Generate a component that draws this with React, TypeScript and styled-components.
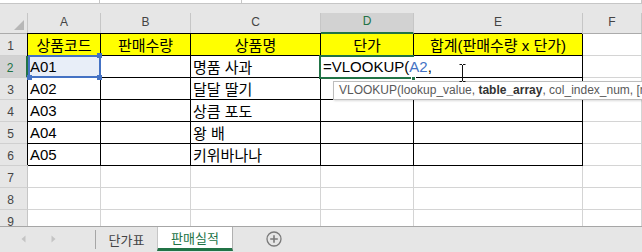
import { Fragment } from 'react'
import styled, { createGlobalStyle } from 'styled-components'

const GlobalStyle = createGlobalStyle`
  * { box-sizing: border-box; }
  html, body { margin: 0; padding: 0; background: #fff; }
  body { font-family: 'Liberation Sans', 'Noto Sans CJK KR', sans-serif; }
`

const Window = styled.div`
  width: 642px;
  height: 252px;
  overflow: hidden;
  display: flex;
  flex-direction: column;
  background: #e6e6e6;
`

const FormulaStrip = styled.div`
  flex: none;
  height: 13px;
  display: flex;
  align-items: flex-start;
`

const StripPart = styled.div<{ $w?: number }>`
  height: 4px;
  ${p => (p.$w ? `width: ${p.$w}px;` : 'flex: 1;')}
  background: #fff;
  border-right: 1px solid #c6c6c6;
  border-bottom: 1px solid #c6c6c6;
`

const Sheet = styled.div`
  flex: none;
  height: 213px;
  overflow: hidden;
  display: grid;
  grid-template-columns: 28px 73px 90px 130px 93px 169px 1fr;
  grid-template-rows: 21px repeat(9, 22px);
  background: #fff;
`

const Corner = styled.div`
  position: relative;
  background: #e6e6e6;
  border-right: 1px solid #c6c6c6;
  border-bottom: 1px solid #ababab;
  &::after {
    content: '';
    position: absolute;
    right: 3px;
    bottom: 3px;
    border-style: solid;
    border-width: 0 0 10px 10px;
    border-color: transparent transparent #b7b7b7 transparent;
  }
`

const ColHead = styled.div<{ $active?: boolean }>`
  position: relative;
  z-index: ${p => (p.$active ? 1 : 'auto')};
  display: flex;
  align-items: center;
  justify-content: center;
  padding-bottom: 3px;
  font-size: 12px;
  color: ${p => (p.$active ? '#217346' : '#444')};
  background: ${p => (p.$active ? '#d2d2d2' : '#e6e6e6')};
  border-right: 1px solid #c6c6c6;
  border-bottom: ${p => (p.$active ? '2px solid #217346' : '1px solid #ababab')};
`

const RowHead = styled.div<{ $active?: boolean }>`
  position: relative;
  z-index: ${p => (p.$active ? 1 : 'auto')};
  display: flex;
  align-items: center;
  justify-content: center;
  padding: 2px 6px 0 0;
  font-size: 12px;
  color: ${p => (p.$active ? '#217346' : '#444')};
  background: ${p => (p.$active ? '#d2d2d2' : '#e6e6e6')};
  border-right: ${p => (p.$active ? '2px solid #217346' : '1px solid #c6c6c6')};
  border-bottom: 1px solid #d0d0d0;
`

const Cell = styled.div<{ $boxed?: boolean; $fill?: string; $center?: boolean }>`
  position: relative;
  display: flex;
  align-items: center;
  justify-content: ${p => (p.$center ? 'center' : 'flex-start')};
  padding: 0 2px;
  font-size: 15px;
  white-space: nowrap;
  color: #000;
  background: ${p => p.$fill ?? 'transparent'};
  border-right: 1px solid ${p => (p.$boxed ? '#000' : '#d4d4d4')};
  border-bottom: 1px solid ${p => (p.$boxed ? '#000' : '#d4d4d4')};
  box-shadow: ${p => (p.$boxed ? '-1px -1px 0 #000' : 'none')};
`

const RefBox = styled.div`
  position: absolute;
  left: 0;
  top: -1px;
  right: -1px;
  bottom: -1px;
  z-index: 2;
  border: 2px solid #4472c4;
`

const Handle = styled.span<{ $h: 'left' | 'right'; $v: 'top' | 'bottom' }>`
  position: absolute;
  width: 5px;
  height: 5px;
  background: #4472c4;
  ${p => p.$h}: -3px;
  ${p => p.$v}: -4px;
`

const EditFrame = styled.div`
  position: absolute;
  left: -2px;
  top: -1px;
  right: -1px;
  bottom: -2px;
  z-index: 2;
  border: 2px solid #217346;
`

const FillHandle = styled.span`
  position: absolute;
  right: -4px;
  bottom: -4px;
  width: 5px;
  height: 5px;
  background: #217346;
  border: 1px solid #fff;
`

const EditText = styled.div`
  position: absolute;
  left: 1px;
  top: 1px;
  z-index: 3;
  height: 20px;
  padding: 0 1px;
  line-height: 20px;
  background: #fff;
  font-size: 15px;
  white-space: nowrap;
`

const RefText = styled.span`
  color: #4472c4;
`

const Tooltip = styled.div`
  position: absolute;
  left: 12px;
  top: 25px;
  z-index: 4;
  height: 19px;
  padding: 0 5px;
  line-height: 17px;
  font-size: 12px;
  color: #595959;
  white-space: nowrap;
  background: #fff;
  border: 1px solid #bdbdbd;
  box-shadow: 1px 1px 2px rgba(0, 0, 0, 0.15);
  b {
    color: #333;
  }
`

const IBeam = styled.svg`
  position: absolute;
  left: 44px;
  top: 8px;
  z-index: 5;
`

const TabBar = styled.div`
  flex: none;
  height: 26px;
  display: flex;
  align-items: stretch;
  background: #e6e6e6;
  border-top: 1px solid #a6a6a6;
`

const NavArrows = styled.div`
  width: 95px;
  display: flex;
  align-items: center;
  gap: 25px;
  padding: 0 0 1px 21px;
`

const Divider = styled.div`
  width: 1px;
  margin: 3px 0;
  background: #a6a6a6;
`

const Tab = styled.div<{ $active?: boolean }>`
  width: ${p => (p.$active ? 76 : 61)}px;
  display: flex;
  align-items: center;
  justify-content: center;
  font-family: 'Noto Sans CJK KR', sans-serif;
  font-size: 13px;
  color: ${p => (p.$active ? '#217346' : '#444')};
  background: ${p => (p.$active ? '#fff' : 'transparent')};
  border-left: ${p => (p.$active ? '1px solid #c6c6c6' : 'none')};
  border-right: ${p => (p.$active ? '1px solid #b0b0b0' : 'none')};
  border-bottom: ${p => (p.$active ? '3px solid #217346' : 'none')};
  margin-bottom: ${p => (p.$active ? 1 : 0)}px;
`

const AddSheet = styled.div`
  margin-left: 33px;
  display: flex;
  align-items: center;
  padding-bottom: 1px;
`

const columns = ['A', 'B', 'C', 'D', 'E', 'F']
const headers = ['상품코드', '판매수량', '상품명', '단가', '합계(판매수량 x 단가)']
const products = [
  ['A01', '명품 사과'],
  ['A02', '달달 딸기'],
  ['A03', '상큼 포도'],
  ['A04', '왕 배'],
  ['A05', '키위바나나'],
]

export default function App() {
  return (
    <Window>
      <GlobalStyle />
      <FormulaStrip>
        <StripPart $w={100} />
        <StripPart $w={142} />
        <StripPart />
      </FormulaStrip>
      <Sheet>
        <Corner />
        {columns.map(c => (
          <ColHead key={c} $active={c === 'D'}>
            {c}
          </ColHead>
        ))}

        <RowHead>1</RowHead>
        {headers.map(h => (
          <Cell key={h} $boxed $center $fill="#ffff00">
            {h}
          </Cell>
        ))}
        <Cell />

        {products.map(([code, name], i) => {
          const row = i + 2
          const current = row === 2
          return (
            <Fragment key={code}>
              <RowHead $active={current}>{row}</RowHead>
              <Cell $boxed $fill={current ? '#e8eef8' : undefined}>
                {code}
                {current && (
                  <RefBox>
                    <Handle $h="right" $v="top" />
                    <Handle $h="left" $v="bottom" />
                    <Handle $h="right" $v="bottom" />
                  </RefBox>
                )}
              </Cell>
              <Cell $boxed />
              <Cell $boxed>{name}</Cell>
              <Cell $boxed>
                {current && (
                  <>
                    <EditFrame>
                      <FillHandle />
                    </EditFrame>
                    <EditText>
                      =VLOOKUP(<RefText>A2</RefText>,
                    </EditText>
                    <Tooltip>
                      VLOOKUP(lookup_value, <b>table_array</b>, col_index_num, [range_lookup])
                    </Tooltip>
                  </>
                )}
              </Cell>
              <Cell $boxed>
                {current && (
                  <IBeam width="9" height="18" viewBox="0 0 9 18">
                    <path d="M1.5 0.5h2.5M5 0.5h2.5M4.5 1v16M1.5 17.5h2.5M5 17.5h2.5" stroke="#111" strokeWidth="1" fill="none" />
                  </IBeam>
                )}
              </Cell>
              <Cell />
            </Fragment>
          )
        })}

        {[7, 8, 9].map(row => (
          <Fragment key={row}>
            <RowHead>{row}</RowHead>
            {columns.map(c => (
              <Cell key={c} />
            ))}
          </Fragment>
        ))}
      </Sheet>
      <TabBar>
        <NavArrows>
          <svg width="5" height="8" viewBox="0 0 5 8">
            <path d="M4.5 0.5v7L0.5 4z" fill="#c4c4c4" />
          </svg>
          <svg width="5" height="8" viewBox="0 0 5 8">
            <path d="M0.5 0.5v7L4.5 4z" fill="#c4c4c4" />
          </svg>
        </NavArrows>
        <Divider />
        <Tab>단가표</Tab>
        <Tab $active>판매실적</Tab>
        <AddSheet>
          <svg width="16" height="16" viewBox="0 0 16 16">
            <circle cx="8" cy="8" r="7" stroke="#7a7a7a" strokeWidth="1.3" fill="none" />
            <path d="M8 4.2v7.6M4.2 8h7.6" stroke="#7a7a7a" strokeWidth="1.6" />
          </svg>
        </AddSheet>
      </TabBar>
    </Window>
  )
}
